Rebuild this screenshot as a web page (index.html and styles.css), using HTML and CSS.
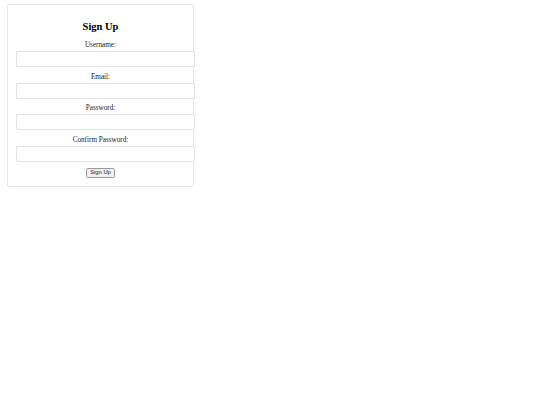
FILE: index.html
```html
<!DOCTYPE html>
<html>
<head>
<meta charset="utf-8">
<link rel="stylesheet" href="styles.css">
</head>
<body>
<div class="card">
  <h2 class="title">Sign Up</h2>
  <form class="form">
    <label class="label" for="u">Username:</label>
    <input class="field" id="u" type="text">
    <label class="label" for="e">Email:</label>
    <input class="field" id="e" type="email">
    <label class="label" for="p">Password:</label>
    <input class="field" id="p" type="password">
    <label class="label" for="c">Confirm Password:</label>
    <input class="field" id="c" type="password">
    <button class="btn" type="button">Sign Up</button>
  </form>
</div>
</body>
</html>
```
FILE: styles.css
```css
html, body {
  margin: 0;
  padding: 0;
  background: #fff;
}
body {
  font-family: "Liberation Serif", "Times New Roman", serif;
  font-size: 7.2px;
  color: #1a1a1a;
}
.card {
  width: 169px;
  margin: 4px 0 0 7px;
  padding: 8px;
  border: 1px solid #e6e6e6;
  border-radius: 2px;
  text-align: center;
}
.title {
  font-size: 10.5px;
  line-height: 12px;
  font-weight: bold;
  color: #000;
  margin: 8px 0 8px;
}
.form {
  margin: 0;
}
.label {
  display: block;
  line-height: 8px;
  margin-bottom: 2px;
}
.field {
  display: block;
  width: 169px;
  box-sizing: content-box;
  height: 14px;
  padding: 0 4px;
  margin: 0 0 5.7px;
  border: 1px solid #e2e2e2;
  border-radius: 1px;
  font-size: 6px;
  background: #fff;
}
.btn {
  font-family: "Liberation Sans", Arial, sans-serif;
  font-size: 5.8px;
  line-height: 7px;
  padding: 0.5px 3px;
  border: 1px solid #9a9a9a;
  border-radius: 1.5px;
  background: #efefef;
  color: #222;
  margin: 0;
}
```
